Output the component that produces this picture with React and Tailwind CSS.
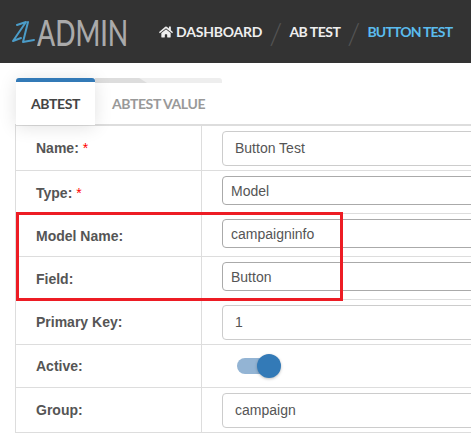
import React from 'react';
import { FaHome } from 'react-icons/fa';

const narrow = 'h-[29px] mb-[4px] pl-[8px] pt-[2px] border-[#aaa]';
const wide = 'h-[35px] pl-[12px] border-[#ccc]';

const rows = [
  { label: 'Name:', required: true, value: 'Button Test', height: 'h-[45px]', input: wide },
  { label: 'Type:', required: true, value: 'Model', height: 'h-[43px]', input: narrow, labelClass: 'pt-[3px]' },
  { label: 'Model Name:', value: 'campaigninfo', height: 'h-[43px]', input: narrow, labelClass: 'pt-[3px]' },
  { label: 'Field:', value: 'Button', height: 'h-[43px]', input: narrow, labelClass: 'pt-[3px]' },
  { label: 'Primary Key:', value: '1', height: 'h-[45px]', input: wide },
  { label: 'Active:', toggle: true, height: 'h-[43px]' },
  { label: 'Group:', value: 'campaign', height: 'h-[45px]', input: wide },
];

const Row = ({ row }) => (
  <div className={`grid grid-cols-[186px_1fr] border-b border-[#ddd] ${row.height}`}>
    <div className={`flex items-center pl-[20px] border-r border-[#ddd] text-[14px] font-bold text-[#555] ${row.labelClass || ''}`}>
      {row.label}
      {row.required && <span className="ml-[4px] text-[#f00] font-normal">*</span>}
    </div>
    <div className="flex items-center pl-[20px]">
      {row.toggle ? (
        <div className="relative ml-[15px] w-[33px] h-[16px] rounded-full bg-[#93b4d4]">
          <div className="absolute right-[-11px] top-[-4px] w-[24px] h-[24px] rounded-full bg-[#337ab7] shadow-[0_1px_3px_rgba(0,0,0,0.25)]"></div>
        </div>
      ) : (
        <input
          readOnly
          value={row.value}
          className={`w-[320px] rounded-[4px] border text-[14px] text-[#555] bg-white outline-none ${row.input}`}
        />
      )}
    </div>
  </div>
);

const Logo = () => (
  <div className="flex items-center">
    <svg width="25" height="26" viewBox="0 0 25 26" fill="none" stroke="#4b9cc8" strokeWidth="2" strokeLinecap="round" strokeLinejoin="round" className="shrink-0">
      <path d="M5 6 L14 3 L1 22 L9 19" />
      <path d="M16 3 L11 23 L22 21" />
    </svg>
    <span className="block w-[90px] text-[36px] font-medium leading-none text-[#aaa] scale-x-[0.74] origin-left whitespace-nowrap">ADMIN</span>
  </div>
);

const Sep = () => <span className="text-[30px] font-light leading-none text-[#555] mx-[7px]">/</span>;

export default function App() {
  return (
    <div className="w-[471px] h-[443px] overflow-hidden bg-white font-['Lato',sans-serif]">
      <header className="flex items-center h-[63px] bg-[#333] pl-[12px]">
        <Logo />
        <nav className="flex items-center ml-[32px] text-[14px] font-bold text-[#eee] whitespace-nowrap">
          <FaHome className="text-[14px] mr-[3px]" />
          <span className="tracking-[-0.2px]">DASHBOARD</span>
          <Sep />
          <span className="tracking-[-0.5px]">AB TEST</span>
          <Sep />
          <span className="tracking-[-0.8px] text-[#5bbcee]">BUTTON TEST</span>
        </nav>
      </header>

      <div className="w-[520px] pl-[15px] pt-[15px]">
        <div className="relative z-10 flex h-[48px] border-b-2 border-[#ddd]">
          <div className="w-[79px] h-[47px] ml-[1px] rounded-t-[3px] border-t-[4px] border-[#337ab7] bg-white shadow-[0_2px_18px_rgba(0,0,0,0.12)] flex items-center justify-center text-[14px] font-bold tracking-[-0.4px] text-[#444] z-10">
            ABTEST
          </div>
          <div className="relative w-[127px] h-[46px] rounded-t-[3px] border-t-[5px] border-[#eee] flex items-center justify-center text-[14px] font-bold tracking-[-0.4px] text-[#999]">
            <div className="absolute left-0 top-[-5px] w-[52px] h-[5px] bg-[#ddd] [clip-path:polygon(0_0,85%_0,100%_100%,0_100%)]"></div>
            ABTEST VALUE
          </div>
        </div>

        <div className="relative border-l border-[#ddd] font-['Liberation_Sans',sans-serif]">
          {rows.map(row => (
            <Row key={row.label} row={row} />
          ))}
          <div className="absolute left-0 top-[86px] w-[327px] h-[89px] border-[3px] border-[#ed1c24]"></div>
        </div>
      </div>
    </div>
  );
}
